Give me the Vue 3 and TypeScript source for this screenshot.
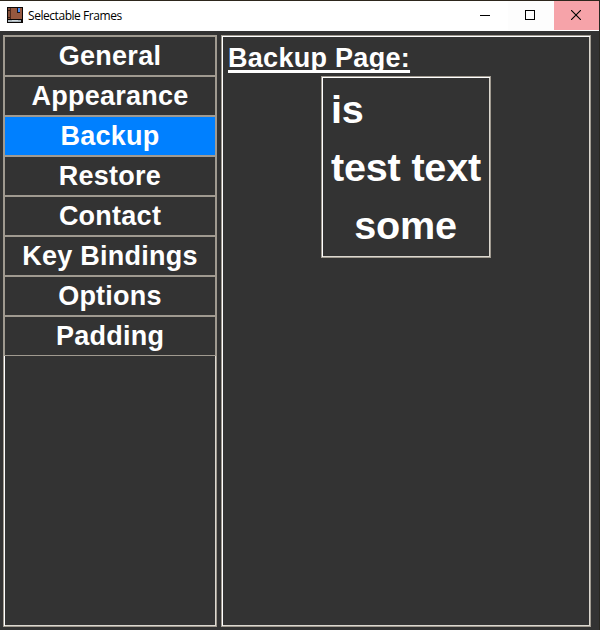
<script setup lang="ts">
import { ref } from 'vue'

const pages: string[] = ['General', 'Appearance', 'Backup', 'Restore', 'Contact', 'Key Bindings', 'Options', 'Padding']
const selected = ref<string>('Backup')
</script>

<template>
  <div class="window">
    <header class="titlebar">
      <svg class="app-icon" width="16" height="16" viewBox="0 0 16 16" shape-rendering="crispEdges">
        <rect width="16" height="16" fill="#0b0706" />
        <rect x="1" y="1" width="2" height="11" fill="#84503b" />
        <rect x="4" y="1" width="11" height="11" fill="#96583f" />
        <rect x="3" y="1" width="1" height="11" fill="#4b291e" />
        <rect x="1" y="3" width="2" height="1" fill="#3a1e15" />
        <rect x="1" y="10" width="2" height="1" fill="#3a1e15" />
        <rect x="10" y="1" width="3" height="5" fill="#16131b" />
        <rect x="11" y="1" width="2" height="4" fill="#4b8cf0" />
        <rect x="1" y="13" width="13" height="2" fill="#a9b4bb" />
        <rect x="5" y="13" width="6" height="1" fill="#d4dce0" />
      </svg>
      <span class="caption">Selectable Frames</span>
      <div class="controls">
        <span class="control minimize">
          <svg width="10" height="10" viewBox="0 0 10 10" shape-rendering="crispEdges"><path d="M0 5.5H10" stroke="#000" /></svg>
        </span>
        <span class="control maximize">
          <svg width="10" height="10" viewBox="0 0 10 10" shape-rendering="crispEdges"><rect x=".5" y=".5" width="9" height="9" fill="none" stroke="#000" /></svg>
        </span>
        <span class="control close">
          <svg width="10" height="10" viewBox="0 0 10 10"><path d="M0 0L10 10M10 0L0 10" stroke="#000" stroke-width="1.1" /></svg>
        </span>
      </div>
    </header>
    <main class="body">
      <nav class="groove sidebar">
        <div
          v-for="page in pages"
          :key="page"
          class="item"
          :class="{ active: page === selected }"
          @click="selected = page"
        >{{ page }}</div>
      </nav>
      <section class="groove page">
        <h1 class="heading">{{ selected }} Page:</h1>
        <div class="groove sample">
          <div class="line">is</div>
          <div class="line">test text</div>
          <div class="line centered">some</div>
        </div>
      </section>
    </main>
  </div>
</template>

<style>
body {
  background: #333;
}
</style>

<style scoped>
.window {
  box-sizing: border-box;
  width: 600px;
  height: 630px;
  border-top: 1px solid #2d261c;
  border-right: 1px solid #292822;
  background: #333;
  color: #fff;
  font-family: "Liberation Sans", Arial, sans-serif;
  font-weight: bold;
  overflow: hidden;
}
.titlebar {
  display: flex;
  align-items: center;
  height: 30px;
  padding-left: 7px;
  background: #fff;
  color: #000;
}
.app-icon {
  margin-top: -2px;
}
.caption {
  margin-top: -1px;
  margin-left: 5px;
  font: 12px "Open Sans", "Noto Sans", sans-serif;
  letter-spacing: -0.45px;
}
.controls {
  display: flex;
  align-self: stretch;
  margin-left: auto;
}
.control {
  box-sizing: border-box;
  display: flex;
  align-items: flex-start;
  justify-content: center;
  width: 46px;
  height: 29px;
  padding-top: 9px;
}
.maximize {
  padding-right: 2px;
  background: #fdfdfd;
}
.close {
  width: 45px;
  padding-right: 1px;
  background: #f6a3a9;
}
.body {
  display: flex;
  gap: 4px;
  height: 592px;
  padding: 4px 8px 0 3px;
}
.groove {
  box-sizing: border-box;
  border: 1px solid #a09a90;
  box-shadow: inset 1px 1px #fff, inset -1px -1px #dcd8d0;
}
.sidebar {
  width: 214px;
}
.item {
  box-sizing: border-box;
  height: 40px;
  border: 1px solid #a09a90;
  background: #333;
  font-size: 27px;
  letter-spacing: 0.25px;
  line-height: 38px;
  text-align: center;
}
.active {
  background: #0080ff;
}
.page {
  flex: 1;
  padding: 6px;
}
.heading {
  width: max-content;
  height: 30px;
  margin: 0 0 3px;
  padding-top: 1px;
  font-size: 27px;
  letter-spacing: 0.29px;
  line-height: 31px;
  text-decoration: underline 3px;
  text-decoration-skip-ink: none;
  text-underline-offset: 3px;
}
.sample {
  width: 170px;
  height: 182px;
  margin: 0 auto;
  padding: 3px 9px;
  font-size: 39.6px;
  letter-spacing: -0.2px;
}
.line {
  height: 58px;
  line-height: 58px;
  white-space: nowrap;
}
.centered {
  padding-right: 1px;
  text-align: center;
}
</style>
